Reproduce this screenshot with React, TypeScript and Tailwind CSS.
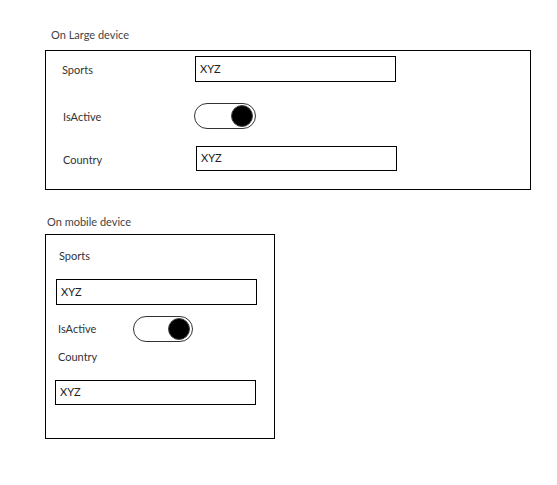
export default function App() {
  const font = { fontFamily: '"Lato", "Noto Sans", sans-serif' };

  const Toggle = ({ w }: { w: string }) => (
    <div
      className={`${w} h-[26px] rounded-full border border-[#333] bg-white flex items-center justify-end pr-[2px]`}
    >
      <div className="w-[22px] h-[22px] rounded-full bg-black border border-[#444]" />
    </div>
  );

  const Input = ({ w, h }: { w: string; h: string }) => (
    <div className={`${w} ${h} border border-black bg-white flex items-center pl-[4px] text-[11px] text-[#222]`}>
      XYZ
    </div>
  );

  return (
    <div className="w-[557px] h-[485px] bg-white text-[#333]" style={font}>
      <div className="pt-[29px] pl-[45px]">
        {/* Desktop layout */}
        <div className="pl-[6px] text-[11px] leading-[12px] text-[#444]">On Large device</div>
        <div className="mt-[9px] w-[486px] h-[140px] border border-black pt-[5px]">
          <div className="flex items-center">
            <span className="w-[149px] pl-[16px] text-[11px] pt-[3px]">Sports</span>
            <Input w="w-[201px]" h="h-[26px]" />
          </div>
          <div className="mt-[21px] flex items-center">
            <span className="w-[148px] pl-[17px] text-[11px] pt-[3px]">IsActive</span>
            <Toggle w="w-[62px]" />
          </div>
          <div className="mt-[17px] flex items-center">
            <span className="w-[150px] pl-[17px] text-[11px] pt-[3px]">Country</span>
            <Input w="w-[201px]" h="h-[25px]" />
          </div>
        </div>

        {/* Mobile layout */}
        <div className="mt-[26px] pl-[2px] text-[11px] leading-[12px] text-[#444]">On mobile device</div>
        <div className="mt-[6px] w-[230px] h-[205px] border border-black">
          <div className="mt-[14px] pl-[13px] text-[11px] leading-[14px]">Sports</div>
          <div className="mt-[16px] pl-[10px]">
            <Input w="w-[201px]" h="h-[26px]" />
          </div>
          <div className="mt-[11px] flex items-center">
            <span className="w-[87px] pl-[12px] text-[11px]">IsActive</span>
            <Toggle w="w-[60px]" />
          </div>
          <div className="mt-[8px] pl-[12px] text-[11px] leading-[14px]">Country</div>
          <div className="mt-[16px] pl-[9px]">
            <Input w="w-[201px]" h="h-[25px]" />
          </div>
        </div>
      </div>
    </div>
  );
}
